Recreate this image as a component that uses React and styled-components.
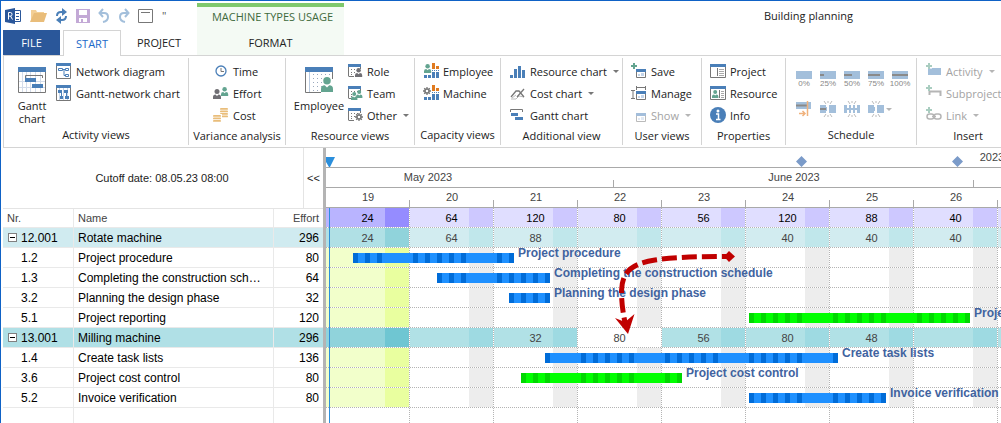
import React from "react";
import styled, { createGlobalStyle, css } from "styled-components";

const DAY = 12;
const WEEK = DAY * 7;

const weeks = [19, 20, 21, 22, 23, 24, 25, 26, 27];
const totals = [24, 64, 120, 80, 56, 120, 88, 40, ""];

const rows = [
  { nr: "12.001", name: "Rotate machine", effort: 296, group: "light", usage: [24, 64, 88, "", "", 40, 40, 40, ""] },
  { nr: "1.2", name: "Project procedure", effort: 80, start: 27, end: 188 },
  { nr: "1.3", name: "Completing the construction schedule", effort: 64, start: 111, end: 224 },
  { nr: "3.2", name: "Planning the design phase", effort: 32, start: 183, end: 224 },
  { nr: "5.1", name: "Project reporting", effort: 120, start: 423, end: 644, color: "green" },
  { nr: "13.001", name: "Milling machine", effort: 296, group: "dark", free: 3, usage: ["", "", 32, 80, 56, 80, 48, "", ""] },
  { nr: "1.4", name: "Create task lists", effort: 136, start: 219, end: 512 },
  { nr: "3.6", name: "Project cost control", effort: 80, start: 195, end: 356, color: "green" },
  { nr: "5.2", name: "Invoice verification", effort: 80, start: 423, end: 560 },
];

// [weekday, weekend, weekday of current week, weekend of current week]
const palettes = {
  total: ["#e0deff", "#cdc8ff", "#b9b4ff", "#958cff"],
  light: ["#d2ecf0", "#c0e7eb", "#b0e0e5", "#90d3db"],
  dark: ["#b1e1e6", "#9edae2", "#90d3db", "#6fc6d2"],
  task: ["#ffffff", "#ededed", "#f2ffcb", "#e9ff9f"],
  empty: ["#ffffff", "#ffffff", "#ffffff", "#ffffff"],
};

const BLUE = "#4a7fb8";
const GREY = "#777777";
const GREEN = "#63a490";
const PALE = "#a3bfdb";

/* ---------- icons ---------- */

const Svg = ({ w = 16, h = 16, children, ...rest }) => (
  <svg width={w} height={h} viewBox={`0 0 ${w} ${h}`} fill="none" aria-hidden="true" {...rest}>
    {children}
  </svg>
);

const Person = ({ x = 0, y = 0, s = 1, color = GREEN }) => (
  <g transform={`translate(${x} ${y}) scale(${s})`} fill={color}>
    <circle cx="4" cy="2.5" r="2.5" />
    <path d="M0 10V8q0-2.500 2.500-2.500L4 7l1.500-1.500Q8 5.500 8 8v2z" />
  </g>
);

const Gear = ({ x = 0, y = 0, color = GREY }) => (
  <g transform={`translate(${x} ${y})`} stroke={color}>
    <circle cx="4" cy="4" r="2" strokeWidth="1.500" />
    <path d="M4 0v2M4 6v2M0 4h2M6 4h2M1.200 1.200l1.300 1.300M5.500 5.500l1.300 1.300M6.800 1.200L5.500 2.500M2.500 5.500L1.200 6.800" strokeWidth="1.300" />
  </g>
);

const Coins = ({ x, y, n }) =>
  [...Array(n).keys()].map((i) => (
    <rect key={i} x={x} y={y + i * 2.5} width="8" height="1.800" rx="0.900" fill="#e9bd7a" />
  ));

const Sheet = ({ children }) => (
  <Svg>
    <path d="M1.500 4v9M1.500 13.500H7M13.500 4v2" stroke={GREY} />
    <path d="M1 1h13v3H1z" fill={BLUE} />
    <path d="M4 6.500h9M4 9.500h4M4 11.500h3" stroke={GREY} strokeDasharray="1 2" />
    {children}
  </Svg>
);

const Capacity = ({ children }) => (
  <Svg>
    <path d="M9 0h3v6H9zM13 3h3v3h-3z" fill="#e07b20" />
    <path d="M9 7.500h7" stroke={BLUE} strokeDasharray="1 1" />
    <path d="M1 12h3v3H1zM5 12h3v3H5zM9 9h3v6H9zM13 9h3v6h-3z" fill={BLUE} />
    {children}
  </Svg>
);

const ViewBox = ({ faded }) => (
  <g opacity={faded ? 0.5 : 1}>
    <path d="M5.500 8v6.500h9V8" stroke={GREY} />
    <path d="M5 6h10v3H5z" fill={BLUE} />
    <path d="M7 13h2v-2H7zM10 13h3v-3h-3z" fill="#c4d5ea" />
  </g>
);

const Plus = ({ color = GREEN }) => <path d="M3 0v6M0 3h6" stroke={color} strokeWidth="2" />;

const icons = {
  network: (
    <Svg>
      <path d="M.5 3v12.500h14V3" stroke={GREY} />
      <path d="M0 0h15v3H0z" fill={BLUE} />
      <path d="M2.500 5.500h4v2h-4zM9.500 5.500h3v2h-3zM9.500 11.500h3v2h-3zM6.500 6.500h3M8 6.500v6h1.500" stroke={BLUE} />
    </Svg>
  ),
  ganttNetwork: (
    <Svg>
      <path d="M.5 3v12.500h14V3" stroke={GREY} />
      <path d="M3.500 3v12M7.500 3v12M11.500 3v12" stroke="#c4d5ea" />
      <path d="M0 0h15v3H0zM2 5h4v3H2zM8 5h4v3H8zM4 11h3v3H4zM9 11h4v3H9z" fill={BLUE} />
      <path d="M5.500 8v3M10.500 8v3" stroke={BLUE} />
    </Svg>
  ),
  time: (
    <Svg>
      <circle cx="8" cy="8" r="5" stroke={BLUE} strokeWidth="1.300" />
      <path d="M8 5v3.500h3" stroke={GREY} />
    </Svg>
  ),
  effort: (
    <Svg>
      <Person x={0} y={4} color="#706f74" />
      <Person x={8} y={2} s={0.9} />
    </Svg>
  ),
  cost: (
    <Svg>
      <Coins x={7} y={1} n={4} />
      <path d="M0 7h9v8H0z" fill="#fff" />
      <Coins x={0} y={8} n={3} />
    </Svg>
  ),
  role: (
    <Sheet>
      <Person x={8} y={5} s={0.9} color="#706f74" />
    </Sheet>
  ),
  team: (
    <Sheet>
      <Person x={4} y={7} s={0.8} />
      <Person x={9} y={5} s={0.8} />
    </Sheet>
  ),
  other: (
    <Sheet>
      <Gear x={8} y={6} />
    </Sheet>
  ),
  capEmployee: (
    <Capacity>
      <Person x={1} y={1} s={0.9} />
    </Capacity>
  ),
  capMachine: (
    <Capacity>
      <Gear x={0} y={2} />
    </Capacity>
  ),
  resourceChart: (
    <Svg>
      <path d="M0 12h3v3H0zM4 6h3v9H4zM8 3h3v12H8zM12 7h3v8h-3z" fill={BLUE} />
    </Svg>
  ),
  costChart: (
    <Svg>
      <path d="M1 14h5l3-3 5 1M2 13l4-3" stroke="#bbb" />
      <path d="M1 12l5-6h3l5 6M7 12l7-8" stroke={GREY} strokeWidth="1.300" />
    </Svg>
  ),
  ganttChart: (
    <Svg>
      <path d="M.5 5V2.500h12V5" stroke={GREY} />
      <path d="M1 6h7v3H1zM5 10h8v3H5z" fill={BLUE} />
    </Svg>
  ),
  save: (
    <Svg>
      <Plus />
      <ViewBox />
    </Svg>
  ),
  manage: (
    <Svg>
      <path d="M5.500 1v4M14.500 1v4M5.500 2.500h9M0 5.500h4M0 13.500h4M2 5.500v8" stroke={GREY} />
      <ViewBox />
    </Svg>
  ),
  show: (
    <Svg>
      <ViewBox faded />
    </Svg>
  ),
  project: (
    <Svg>
      <path d="M.5 3v11.500h15V3M7.500 5v8" stroke={GREY} />
      <path d="M0 1h16v3H0z" fill={BLUE} />
      <path d="M9 6.500h5M9 8.500h5M9 10.500h5M9 12.500h5" stroke="#aaa" />
    </Svg>
  ),
  resource: (
    <Svg>
      <path d="M.5 3v11.500h15V3M9.500 5v8" stroke={GREY} />
      <path d="M0 1h16v3H0z" fill={BLUE} />
      <path d="M11 6.500h3M11 8.500h3M11 10.500h3M11 12.500h3" stroke="#aaa" />
      <Person x={2} y={5} s={0.8} />
    </Svg>
  ),
  info: (
    <Svg>
      <circle cx="8" cy="8" r="8" fill={BLUE} />
      <circle cx="8" cy="4" r="1.500" fill="#fff" />
      <path d="M6 7h2.500v5.500M6 12.500h4.500" stroke="#fff" strokeWidth="1.500" />
    </Svg>
  ),
  activity: (
    <Svg>
      <path d="M2 5h13v7H2z" fill={PALE} />
      <path d="M0 0h6v6H0z" fill="#fff" fillOpacity="0.6" />
      <Plus color="#a9cdc0" />
    </Svg>
  ),
  subproject: (
    <Svg>
      <path d="M3.500 10V6.500h11V11" stroke="#b5b5b5" strokeWidth="2" />
      <Plus color="#a9cdc0" />
    </Svg>
  ),
  link: (
    <Svg>
      <rect x="1" y="7" width="7" height="5" rx="2.500" stroke="#b5b5b5" strokeWidth="1.500" />
      <rect x="8" y="7" width="7" height="5" rx="2.500" stroke="#b5b5b5" strokeWidth="1.500" />
      <path d="M6 9.500h4" stroke="#b5b5b5" strokeWidth="1.500" />
      <Plus color="#a9cdc0" />
    </Svg>
  ),
};

const GanttBig = () => (
  <Svg w={28} h={26}>
    <path d="M.5 5v20.500h27V5" stroke={GREY} />
    <path d="M4.500 5v20M8.500 5v20M12.500 5v20M17.500 5v20M22.500 5v20M1 14.500h26M1 20.500h26" stroke="#d3dcea" />
    <path d="M7.500 11V8.500h17V11" stroke={GREY} />
    <path d="M0 0h28v5H0zM7 11h11v4H7zM14 17h11v4H14z" fill={BLUE} />
  </Svg>
);

const EmployeeBig = () => (
  <Svg w={28} h={26}>
    <path d="M.5 5v20.500H16M27.500 5v7" stroke={GREY} />
    <path d="M4.500 5v20" stroke="#b9cbe2" />
    <path d="M8.500 7v17M12.500 7v17M16.500 7v17M20.500 7v4M24.500 7v4" stroke="#9aa9bd" strokeDasharray="1 3" />
    <path d="M0 0h28v5H0z" fill={BLUE} />
    <Person x={16} y={10} s={1.5} />
  </Svg>
);

const Logo = () => (
  <Svg w={17} h={16}>
    <path d="M8.500 2.500h7v11h-7z" stroke="#2a579a" fill="#fff" />
    <path d="M11 5.500h3M11 8.500h3M11 11.500h3" stroke="#2a579a" />
    <path d="M0 2l10-2v16L0 14z" fill="#2a579a" />
    <path d="M3.500 11.500v-7h2q1.500 0 1.500 1.800t-1.500 1.800h-2M5.500 8l2 3.500" stroke="#fff" />
  </Svg>
);

const quick = [
  {
    label: "Open",
    icon: (
      <Svg w={17}>
        <path d="M1 13V2h5l1 2h7v2" fill="#f3cf96" />
        <path d="M0 14L4 5h13l-3 9z" fill="#e9bd7a" />
      </Svg>
    ),
  },
  {
    label: "Refresh",
    icon: (
      <Svg w={13}>
        <path d="M2 8q0-4 4-4h2M11 8q0 4-4 4H5" stroke={BLUE} strokeWidth="2" />
        <path d="M7 0l5 4-5 4zM6 8l-5 4 5 4z" fill={BLUE} />
      </Svg>
    ),
  },
  {
    label: "Save",
    icon: (
      <Svg w={14}>
        <path d="M0 1h14v14H0zM3 2v5h8V2zM3 10v4h8v-4z" fill="#c3a9d6" fillRule="evenodd" />
        <path d="M5 11h2v4H5z" fill="#c3a9d6" />
      </Svg>
    ),
  },
  {
    label: "Undo",
    icon: (
      <Svg w={12}>
        <path d="M2 5h4q4 0 4 4t-5 5M5 1L1.500 5 5 9" stroke={PALE} strokeWidth="2" />
      </Svg>
    ),
  },
  {
    label: "Redo",
    icon: (
      <Svg w={12}>
        <path d="M10 5H6q-4 0-4 4t5 5M7 1l3.500 4L7 9" stroke={PALE} strokeWidth="2" />
      </Svg>
    ),
  },
  {
    label: "Window",
    icon: (
      <Svg>
        <path d="M.5 1.500h14v13H.5z" stroke={GREY} />
        <path d="M3 4.500h9" stroke={GREY} />
      </Svg>
    ),
  },
];

const Burst = ({ kind }) => (
  <Svg>
    <path d="M4 0l2 3M12 0l-2 3M8 0v2M4 16l2-3M12 16l-2-3M8 14v2" stroke="#bbb" />
    {kind === "center" ? (
      <path d="M0 4h3v8H0zM5 4h2v8H5zM9 4h2v8H9zM13 4h3v8h-3zM3 7h10v2H3z" fill={PALE} />
    ) : (
      <path d="M0 4h6v8H0zM9 4h7v8H9zM6 6h1v4H6z" fill={PALE} />
    )}
    {kind === "done" && <path d="M0 8h6" stroke="#8a8a8a" strokeWidth="2" />}
  </Svg>
);

/* ---------- page ---------- */

const ribbonFont = css`
  font-family: "Open Sans", "Noto Sans", sans-serif;
  font-size: 11px;
`;

const GlobalStyle = createGlobalStyle`
  * { box-sizing: border-box; }
  body { margin: 0; background: #fff; }
  button { border: 0; padding: 0; background: none; font: inherit; color: inherit; }
  svg { display: block; flex: none; }
`;

const Window = styled.div`
  display: flex;
  flex-direction: column;
  min-height: 100vh;
  padding-left: 2px;
  overflow: hidden;
  border-top: 1px solid #0f62c6;
  border-left: 1px solid #0f62c6;
  color: #222;
  ${ribbonFont}
`;

const Header = styled.header`
  display: flex;
`;

const HeaderMain = styled.div`
  flex: 0 0 194px;
  min-width: 0;
`;

const QuickBar = styled.div`
  display: flex;
  align-items: center;
  gap: 8px;
  height: 29px;
  padding-left: 2px;
`;

const More = styled.button`
  color: #555;
`;

const Tabs = styled.nav`
  display: flex;
  height: 25px;
`;

const Tab = styled.button`
  padding: 0 16px;
  text-transform: uppercase;
  ${(p) => p.$kind === "file" && css`
    flex: 0 0 57px;
    margin-right: 3px;
    padding: 0;
    background: #2a579a;
    color: #fff;
  `}
  ${(p) => p.$kind === "active" && css`
    position: relative;
    flex: 0 0 58px;
    padding: 0;
    margin-bottom: -1px;
    border: 1px solid #d4d4d4;
    border-bottom: 0;
    background: #fff;
    color: #1b6ac9;
  `}
`;

const ContextTabs = styled.div`
  display: flex;
  flex-direction: column;
  align-items: center;
  flex: 0 0 147px;
  margin-top: 2px;
  border-top: 4px solid #7fc86c;
  background: #f4faf4;
  line-height: 20px;
`;

const ContextTitle = styled.div`
  padding-left: 4px;
  white-space: nowrap;
  color: #3f6a3c;
`;

const FormatTab = styled(Tab)`
  height: 28px;
  padding: 4px 16px 0;
`;

const DocTitle = styled.h1`
  flex: 1;
  margin: 0;
  padding: 5px 148px 0 0;
  text-align: right;
  font-size: 11px;
  font-weight: 400;
  line-height: 20px;
`;

const Ribbon = styled.div`
  display: flex;
  height: 93px;
  border: 1px solid #d4d4d4;
  border-right: 0;
  overflow: hidden;
`;

const Group = styled.section`
  display: flex;
  flex-direction: column;
  flex: 0 0 ${(p) => p.$width}px;
  min-width: 0;
  margin: 2px 0;
  border-right: 1px solid #d4d4d4;
  white-space: nowrap;
`;

const GroupBody = styled.div`
  display: flex;
  height: 68px;
  padding: 2px 0 0 ${(p) => p.$indent}px;
`;

const GroupTitle = styled.h2`
  margin: 0;
  font-size: 11px;
  font-weight: 400;
  line-height: 20px;
  text-align: center;
`;

const Column = styled.div`
  display: flex;
  flex-direction: column;
`;

const ItemButton = styled.button`
  display: flex;
  align-items: center;
  gap: 4px;
  height: 22px;
  color: ${(p) => (p.disabled ? "#a3a3a3" : "inherit")};
`;

const Caret = styled.span`
  margin-left: 2px;
  border: 3px solid transparent;
  border-top-color: ${(p) => (p.$faded ? "#b5b5b5" : "#777")};
  border-bottom: 0;
`;

const BigButton = styled.button`
  display: flex;
  flex-direction: column;
  align-items: center;
  width: ${(p) => (p.$wide ? 56 : 48)}px;
  padding-top: 7px;
  line-height: 13px;

  svg {
    margin-bottom: 6px;
  }
`;

const ScheduleGrid = styled.div`
  display: grid;
  grid-template-columns: repeat(5, 24px);
  grid-template-rows: 28px 20px;
  padding-top: 11px;
`;

const Percent = styled.button`
  display: flex;
  flex-direction: column;
  align-items: center;
  width: 16px;
  font-family: "Liberation Sans", sans-serif;
  font-size: 8px;
  line-height: 10px;
  color: #888;
`;

const ScheduleButton = styled.button`
  display: flex;
  align-items: center;
`;

const Main = styled.main`
  display: flex;
  flex: 1;
  font-family: "Liberation Sans", Arial, sans-serif;
`;

const ListPane = styled.div`
  display: flex;
  flex-direction: column;
  flex: 0 0 320px;
`;

const Cutoff = styled.div`
  display: flex;
  height: 60px;
  line-height: 60px;
  font-size: 11px;
  text-align: center;
`;

const CutoffText = styled.div`
  flex: 1;
  padding-left: 18px;
`;

const Collapse = styled.button`
  width: 20px;
  border-left: 1px solid #e4e4e4;
`;

const Table = styled.table`
  width: 100%;
  table-layout: fixed;
  border-collapse: separate;
  border-spacing: 0;
  border-top: 1px solid #e4e4e4;
  font-size: 12px;
  color: #000;

  th,
  td {
    height: 20px;
    padding: 0 4px;
    overflow: hidden;
    border-bottom: 1px solid #e9e9e9;
    border-right: 1px solid #e9e9e9;
    text-align: left;
    text-overflow: ellipsis;
    white-space: nowrap;
  }
  td:nth-child(2) {
    padding-right: 8px;
  }
  th {
    height: 19px;
    font-size: 11px;
    font-weight: 400;
    color: #444;
  }
  th:last-child,
  td:last-child {
    border-right: 0;
    text-align: right;
  }
`;

const listTint = { light: "#d0ebf0", dark: "#b0e0e6" };

const Row = styled.tr`
  background: ${(p) => listTint[p.$group] || "#fff"};
`;

const NrCell = styled.div`
  display: flex;
  align-items: center;
  padding-left: ${(p) => (p.$group ? 1 : 14)}px;
  gap: 4px;
`;

const Toggle = styled.button`
  display: flex;
  align-items: center;
  justify-content: center;
  width: 9px;
  height: 9px;
  border: 1px solid #808080;
  background: #fff;

  &::after {
    content: "";
    width: 5px;
    height: 1px;
    background: #000;
  }
`;

const ListRest = styled.div`
  display: grid;
  grid-template-columns: 71px 200px 1fr;
  flex: 1;
  min-height: 14px;

  div:not(:last-child) {
    border-right: 1px solid #e9e9e9;
  }
`;

const Splitter = styled.div`
  flex: 0 0 3px;
  background: #b4b4b4;
`;

const Chart = styled.div`
  position: relative;
  display: flex;
  flex-direction: column;
  flex: 1;
  min-width: 0;
  overflow: hidden;
  font-size: 11px;
`;

const Scale = styled.div`
  display: flex;
  height: 20px;
  border-bottom: 1px solid #a9a9a9;
  line-height: 19px;
  text-align: center;
  color: #444;
`;

const Span = styled.div`
  flex: 0 0 ${(p) => p.$days * DAY}px;
  margin-left: ${(p) => -(p.$before || 0) * DAY}px;
  background: linear-gradient(#a9a9a9, #a9a9a9) right bottom / 1px 7px no-repeat;
`;

const ChartRow = styled.div`
  position: relative;
  display: flex;
  flex: ${(p) => (p.$rest ? "1 0 14px" : "0 0 20px")};
  border-bottom: ${(p) => (p.$rest ? "0" : "1px dotted #b4b4b4")};
  line-height: 17px;
  color: ${(p) => (p.$strong ? "#000" : "#444")};
`;

const WeekCell = styled.div`
  flex: 0 0 ${WEEK}px;
  padding-top: 2px;
  border-right: 1px dotted #b4b4b4;
  text-align: center;
  background: linear-gradient(90deg, ${(p) => p.$day} 59px, ${(p) => p.$end} 59px);
  background-clip: padding-box;
`;

const Bar = styled.div`
  position: absolute;
  top: 5px;
  height: 10px;
  background-color: ${(p) => (p.$green ? "#00ff00" : "#1e90ff")};
  background-image: linear-gradient(
    90deg,
    ${[3, 15, 27, 39, 51]
      .map((x) => `transparent ${x}px, var(--shift) ${x}px, var(--shift) ${x + 5}px, transparent ${x + 5}px`)
      .join(", ")}
  );
  background-size: ${WEEK}px 100%;
  --shift: ${(p) => (p.$green ? "#00d800" : "#006cd8")};
`;

const BarLabel = styled.span`
  position: absolute;
  top: -8px;
  left: 100%;
  padding-left: 4px;
  line-height: 16px;
  white-space: nowrap;
  font-size: 12px;
  font-weight: 700;
  color: #41639f;
`;

const Today = styled.div`
  position: absolute;
  top: 60px;
  bottom: 0;
  left: 3px;
  width: 1px;
  background: #2b8fdc;
`;

const Markers = styled.svg`
  position: absolute;
  top: 8px;
  left: 0;
`;

const Arrow = styled.svg`
  position: absolute;
  top: 97px;
  left: 284px;
`;

const Item = ({ icon, label, menu, disabled }) => (
  <ItemButton type="button" disabled={disabled}>
    {icons[icon]}
    {label}
    {menu && <Caret $faded={disabled} />}
  </ItemButton>
);

const RibbonGroup = ({ title, width, indent, children }) => (
  <Group $width={width}>
    <GroupBody $indent={indent}>{children}</GroupBody>
    <GroupTitle>{title}</GroupTitle>
  </Group>
);

function Weeks({ kind, values = [], free }) {
  const [day, end, curDay, curEnd] = palettes[kind];
  return weeks.map((w, i) => (
    <WeekCell
      key={w}
      $day={i === free ? "#fff" : i === 0 ? curDay : day}
      $end={i === free ? "#fff" : i === 0 ? curEnd : end}
    >
      {values[i]}
    </WeekCell>
  ));
}

function AppRibbon() {
  return (
    <Ribbon>
      <RibbonGroup title="Activity views" width={185} indent={4}>
        <BigButton type="button">
          <GanttBig />
          <span>Gantt</span>
          <span>chart</span>
        </BigButton>
        <Column>
          <Item icon="network" label="Network diagram" />
          <Item icon="ganttNetwork" label="Gantt-network chart" />
        </Column>
      </RibbonGroup>
      <RibbonGroup title="Variance analysis" width={97} indent={24}>
        <Column>
          <Item icon="time" label="Time" />
          <Item icon="effort" label="Effort" />
          <Item icon="cost" label="Cost" />
        </Column>
      </RibbonGroup>
      <RibbonGroup title="Resource views" width={129} indent={5}>
        <BigButton type="button" $wide>
          <EmployeeBig />
          Employee
        </BigButton>
        <Column>
          <Item icon="role" label="Role" />
          <Item icon="team" label="Team" />
          <Item icon="other" label="Other" menu />
        </Column>
      </RibbonGroup>
      <RibbonGroup title="Capacity views" width={86} indent={8}>
        <Column>
          <Item icon="capEmployee" label="Employee" />
          <Item icon="capMachine" label="Machine" />
        </Column>
      </RibbonGroup>
      <RibbonGroup title="Additional view" width={122} indent={9}>
        <Column>
          <Item icon="resourceChart" label="Resource chart" menu />
          <Item icon="costChart" label="Cost chart" menu />
          <Item icon="ganttChart" label="Gantt chart" />
        </Column>
      </RibbonGroup>
      <RibbonGroup title="User views" width={79} indent={8}>
        <Column>
          <Item icon="save" label="Save" />
          <Item icon="manage" label="Manage" />
          <Item icon="show" label="Show" menu disabled />
        </Column>
      </RibbonGroup>
      <RibbonGroup title="Properties" width={84} indent={8}>
        <Column>
          <Item icon="project" label="Project" />
          <Item icon="resource" label="Resource" />
          <Item icon="info" label="Info" />
        </Column>
      </RibbonGroup>
      <RibbonGroup title="Schedule" width={131} indent={10}>
        <ScheduleGrid>
          {[0, 25, 50, 75, 100].map((n) => (
            <Percent key={n} type="button" disabled>
              <Svg h={8}>
                <path d="M0 0h16v8H0z" fill={PALE} />
                <path d={`M0 4h${(n * 16) / 100}`} stroke="#8a8a8a" strokeWidth="2" />
              </Svg>
              {n}%
            </Percent>
          ))}
          <ScheduleButton type="button" aria-label="Update to date" disabled>
            <Svg>
              <path d="M0 1h15v7H0z" fill={PALE} />
              <path d="M0 4.500h12" stroke="#8a8a8a" strokeWidth="2" />
              <path d="M11.500 0v15M3 12.500h6M6.500 10l2.500 2.500L6.500 15" stroke="#f0b27d" strokeWidth="1.500" />
            </Svg>
          </ScheduleButton>
          <ScheduleButton type="button" aria-label="Split at progress" disabled>
            <Burst kind="done" />
          </ScheduleButton>
          <ScheduleButton type="button" aria-label="Split in parts" disabled>
            <Burst kind="center" />
          </ScheduleButton>
          <ScheduleButton type="button" aria-label="Split" disabled>
            <Burst />
            <Caret $faded />
          </ScheduleButton>
        </ScheduleGrid>
      </RibbonGroup>
      <RibbonGroup title="Insert" width={103} indent={9}>
        <Column>
          <Item icon="activity" label="Activity" menu disabled />
          <Item icon="subproject" label="Subproject" disabled />
          <Item icon="link" label="Link" menu disabled />
        </Column>
      </RibbonGroup>
    </Ribbon>
  );
}

function ActivityList() {
  return (
    <ListPane>
      <Cutoff>
        <CutoffText>Cutoff date: 08.05.23 08:00</CutoffText>
        <Collapse type="button">&lt;&lt;</Collapse>
      </Cutoff>
      <Table>
        <colgroup>
          <col width="71" />
          <col width="200" />
          <col />
        </colgroup>
        <thead>
          <tr>
            <th>Nr.</th>
            <th>Name</th>
            <th>Effort</th>
          </tr>
        </thead>
        <tbody>
          {rows.map((r) => (
            <Row key={r.nr} $group={r.group}>
              <td>
                <NrCell $group={r.group}>
                  {r.group && <Toggle type="button" aria-label="Collapse" />}
                  {r.nr}
                </NrCell>
              </td>
              <td>{r.name}</td>
              <td>{r.effort}</td>
            </Row>
          ))}
        </tbody>
      </Table>
      <ListRest>
        <div />
        <div />
        <div />
      </ListRest>
    </ListPane>
  );
}

function Gantt() {
  return (
    <Chart>
      <Scale>
        <Span $days={365} $before={127}>2023</Span>
      </Scale>
      <Scale>
        <Span $days={31} $before={7}>May 2023</Span>
        <Span $days={30}>June 2023</Span>
      </Scale>
      <Scale>
        {weeks.map((w) => (
          <Span key={w} $days={7}>{w}</Span>
        ))}
      </Scale>
      <ChartRow $strong>
        <Weeks kind="total" values={totals} />
      </ChartRow>
      {rows.map((r) => (
        <ChartRow key={r.nr}>
          <Weeks kind={r.group || "task"} values={r.usage} free={r.free} />
          {!r.group && (
            <Bar
              $green={r.color === "green"}
              style={{ left: r.start, width: r.end - r.start, backgroundPositionX: -r.start }}
            >
              <BarLabel>{r.name}</BarLabel>
            </Bar>
          )}
        </ChartRow>
      ))}
      <ChartRow $rest>
        <Weeks kind="empty" />
      </ChartRow>
      <Today />
      <Markers width="650" height="12" aria-hidden="true">
        <path d="M0 1h9L4 11H3L0 6z" fill="#2b8fdc" />
        <path d="M475.500 0l5.500 5.500-5.500 5.500-5.500-5.500zM631.500 0l5.500 5.500-5.500 5.500-5.500-5.500z" fill="#7b9bc9" />
      </Markers>
      <Arrow width="130" height="96" viewBox="0 0 130 96" fill="none" aria-hidden="true">
        <path
          d="M118 11.500C90 11.500 65 12 45 15C20 19 12 28 11.500 46C11.500 58 13 68 15.500 80"
          stroke="#c00000"
          strokeWidth="5"
          strokeDasharray="15 5"
          strokeDashoffset="9"
        />
        <path d="M119 6l6 5.500-6 5.500-5-5.500z" fill="#c00000" />
        <path d="M5 73l10 4 9.500-8-6.500 20z" fill="#c00000" />
      </Arrow>
    </Chart>
  );
}

export default function App() {
  return (
    <Window>
      <GlobalStyle />
      <Header>
        <HeaderMain>
          <QuickBar>
            <Logo />
            {quick.map((q) => (
              <button key={q.label} type="button" aria-label={q.label}>
                {q.icon}
              </button>
            ))}
            <More type="button">&quot;</More>
          </QuickBar>
          <Tabs>
            <Tab type="button" $kind="file">File</Tab>
            <Tab type="button" $kind="active">Start</Tab>
            <Tab type="button">Project</Tab>
          </Tabs>
        </HeaderMain>
        <ContextTabs>
          <ContextTitle>MACHINE TYPES USAGE</ContextTitle>
          <FormatTab type="button">Format</FormatTab>
        </ContextTabs>
        <DocTitle>Building planning</DocTitle>
      </Header>
      <AppRibbon />
      <Main>
        <ActivityList />
        <Splitter />
        <Gantt />
      </Main>
    </Window>
  );
}
